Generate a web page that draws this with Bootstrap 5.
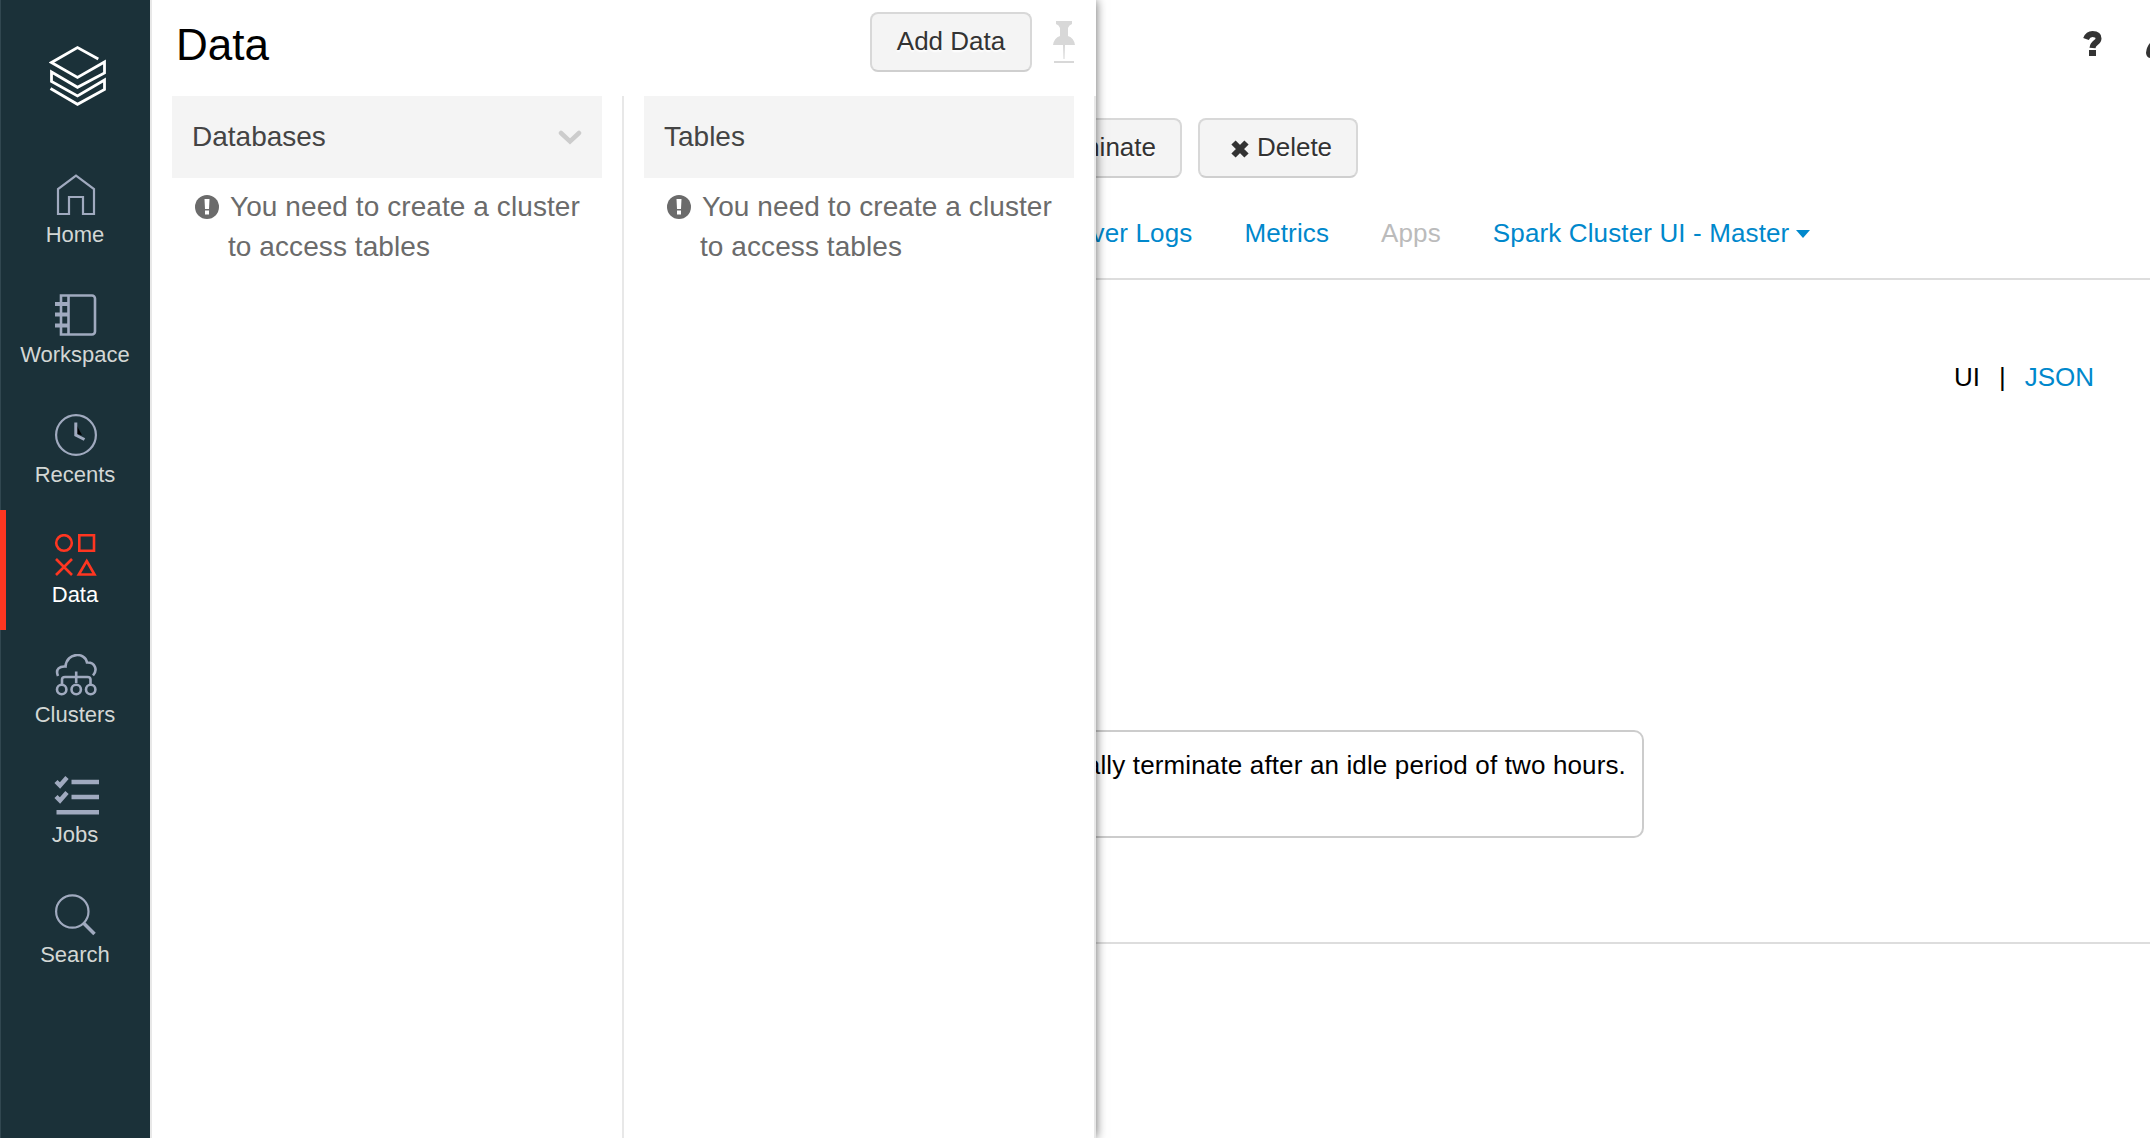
<!DOCTYPE html>
<html lang="en">
<head>
<meta charset="utf-8">
<title>Data</title>
<link href="https://cdn.jsdelivr.net/npm/bootstrap@5.3.0/dist/css/bootstrap.min.css" rel="stylesheet">
<style>
body{font-family:"Liberation Sans",Arial,sans-serif;font-size:26px;line-height:40px;color:#000;background:#fff;height:1138px;overflow:hidden}
a{color:#0088cc;text-decoration:none}
.side-nav{width:150px;background:#1b3139;border-left:1px solid #314750;z-index:6}
.brand-box{height:150px;padding:45px 0 0 48px}
.side-item{height:120px;padding-top:24px;margin-left:-1px;font-size:22px;line-height:28px;color:#d3d7d5;border-left:6px solid transparent;padding-right:6px}
.side-item svg{display:block;width:44px;height:42px;margin-bottom:5px;color:#a0aabf}
.side-item.active{color:#fff;border-left-color:#ff3621}
.side-item.active svg{color:#ff3621}
.data-panel{left:150px;top:0;width:946px;z-index:5;background:#fff;border-left:2px solid #e8e8e8;box-shadow:0 0 10px rgba(0,0,0,.6)}
.panel-head{height:96px;padding:12px 20px 0 24px}
.panel-head h1{font-size:44px;line-height:66px;margin:0;font-weight:400}
.btn-grey{--bs-btn-font-size:26px;--bs-btn-line-height:40px;--bs-btn-padding-y:0;--bs-btn-padding-x:0;--bs-btn-bg:#f4f4f4;--bs-btn-color:#333;--bs-btn-border-color:#d8d8d8;--bs-btn-border-width:2px;--bs-btn-border-radius:8px;height:60px;padding-bottom:2px;border-bottom-color:#cfcfcf;text-shadow:0 2px 2px #fff}
.w-add{width:162px;margin-right:20px}
.w-terminate{width:202px;padding-right:24px}
.w-delete{width:160px;padding-left:3px}
.panel-col{width:472px;padding:0 20px;border-right:2px solid #e8e8e8}
.col-head{height:82px;background:#f4f4f4;color:#444;font-size:28px;padding:0 20px 1px 20px}
.note{color:#6b6b6b;font-size:28px;padding:9px 0 0 22px;letter-spacing:.08px}
.note svg{margin:8px 9px 0 1px;flex:none}
.note-text{text-indent:2px;white-space:nowrap}
.workspace-main{min-width:0}
.top-icons{height:118px;padding:31px 0 0 1932px}
.btn-row{padding-left:830px;height:60px}
.tab-row{height:102px;padding:35px 0 0 908px;gap:52px;border-bottom:2px solid #ddd;letter-spacing:.13px}
.apps-off{color:#bbb}
.caret-down{display:inline-block;border:7.5px solid transparent;border-top:8px solid #0088cc;border-bottom:0;vertical-align:4px;margin-left:7px}
.view-row{padding:77px 56px 0 0;height:450px;gap:19px}
.msg-box{width:744px;height:108px;margin-left:750px;border:2px solid #ccc;border-radius:10px;padding:13px 16px;white-space:nowrap;letter-spacing:.14px}
.lower{height:106px;border-bottom:2px solid #ddd}
</style>
</head>
<body class="d-flex position-relative">
<nav class="side-nav position-relative flex-shrink-0 h-100">
  <div class="brand-box"><svg width="60" height="62" viewBox="0 0 60 62" fill="none" stroke="#fff" stroke-width="2.8"><path d="M49.3 14 28.5 2.5 2.5 17.5 28.5 32.5 55.5 17V28L28.5 42.3 2.5 27V36.500L28.500 51 55.500 35V44.500L28.500 59.300 1.500 43.500"/></svg></div>
  <div class="side-item d-flex flex-column align-items-center"><svg viewBox="0 0 44 42" fill="none" stroke="currentColor" stroke-width="2.2"><path d="M5 40V15L23 1.500 41 15V40H30V23H16V40Z"/></svg>Home</div>
  <div class="side-item d-flex flex-column align-items-center"><svg viewBox="0 0 44 42" fill="none" stroke="currentColor" stroke-width="2.600"><path d="M8 1.500H39a3 3 0 0 1 3 3V37.500a3 3 0 0 1-3 3H8ZM15.500 1.500V40.500"/><path stroke-width="4" d="M2 10H15M2 20.500H15M2 31.500H15"/></svg>Workspace</div>
  <div class="side-item d-flex flex-column align-items-center"><svg viewBox="0 0 44 42" fill="none" stroke="currentColor"><circle cx="23" cy="21" r="19.900" stroke-width="2.200"/><path fill="#000" stroke="none" d="M24 12 29 21 24 20Z"/><path stroke-width="3" d="M22.800 8.500V21L31.500 25.500"/></svg>Recents</div>
  <div class="side-item active d-flex flex-column align-items-center"><svg viewBox="0 0 44 42" fill="none" stroke="currentColor" stroke-width="2.600"><circle cx="11" cy="9" r="7.800"/><path d="M26.300 1.300H41V16.700H26.300ZM3 25 19 41M19 25 3 41M33.700 27 41.500 40.500H25.800Z"/></svg>Data</div>
  <div class="side-item d-flex flex-column align-items-center"><svg viewBox="0 0 44 42" fill="none" stroke="currentColor" stroke-width="2.600"><path d="M5 22C2 15 7 12 12.500 12.500C14 -2 32 -2 34 8.500C42 8 45 16 40 21.500M23.200 17.500V29M9 30V25.500Q9 23 12 23H34.500Q37.500 23 37.500 25.500V30"/><circle cx="8.700" cy="35.500" r="4.700"/><circle cx="23.200" cy="35.500" r="4.700"/><circle cx="37.700" cy="35.500" r="4.700"/></svg>Clusters</div>
  <div class="side-item d-flex flex-column align-items-center"><svg class="overflow-visible" viewBox="0 0 44 42" fill="none" stroke="currentColor" stroke-width="4.400"><path d="M18.500 8H46M18.500 23H46M3.500 38.300H46" /><path d="M3 7.500 7 11.500 14 3.500M3 22.500 7 26.500 14 18.500"/></svg>Jobs</div>
  <div class="side-item d-flex flex-column align-items-center"><svg viewBox="0 0 44 42" fill="none" stroke="currentColor"><circle cx="19.300" cy="17.500" r="16.200" stroke-width="2.200"/><path stroke-width="3.600" d="M30.500 29 41.500 40"/></svg>Search</div>
</nav>

<main class="workspace-main flex-grow-1">
  <div class="top-icons d-flex overflow-hidden">
    <svg class="flex-shrink-0" width="22" height="26" viewBox="0 0 22 26"><path fill="none" stroke="#333" stroke-width="6" d="M4 8Q6 3 10.500 3Q16.500 3 16.500 7.500C16.500 12 11 11 10.500 17"/><path fill="#333" d="M7 19h7v6H7z"/></svg>
    <svg class="flex-shrink-0" width="46" height="30" viewBox="0 0 46 30"><path fill="#333" d="M46 12Q42.500 16 42 22Q42.500 26.500 46 27Z"/></svg>
  </div>
  <div class="btn-row d-flex gap-3">
    <button class="btn btn-grey w-terminate text-end">Terminate</button>
    <button class="btn btn-grey w-delete"><svg width="18" height="18" viewBox="0 0 18 18" stroke="#333" stroke-width="6" class="ms-1 me-2"><path d="M2.500 2.500 15.500 15.500M15.500 2.500 2.500 15.500"/></svg>Delete</button>
  </div>
  <div class="tab-row d-flex text-nowrap">
    <a href="#">Driver Logs</a><a href="#">Metrics</a><span class="apps-off">Apps</span><a href="#">Spark Cluster UI - Master<span class="caret-down"></span></a>
  </div>
  <div class="view-row d-flex justify-content-end"><span>UI</span><span>|</span><a href="#">JSON</a></div>
  <div class="msg-box d-flex justify-content-end">This cluster will automatically terminate after an idle period of two hours.</div>
  <div class="lower"></div>
</main>

<section class="data-panel position-absolute h-100 d-flex flex-column">
  <div class="panel-head d-flex">
    <h1 class="me-auto">Data</h1>
    <button class="btn btn-grey w-add">Add Data</button>
    <svg width="24" height="52" viewBox="0 0 24 52" fill="#d8d8d8"><path d="M4 9h16v3q-3 1-4 4v8q6 2 7 9H1q1-7 7-9v-8q-1-3-4-4zM11 33h2l-.5 14h-1zM2 49h20v2H2z"/></svg>
  </div>
  <div class="d-flex flex-grow-1">
    <div class="panel-col">
      <div class="col-head d-flex align-items-center justify-content-between">Databases<svg width="24" height="16" viewBox="0 0 24 16" fill="none" stroke="#ccc" stroke-width="4.500" stroke-linecap="round"><path d="M3 4 12 12.500 21 4"/></svg></div>
      <div class="note d-flex"><svg width="24" height="24" viewBox="0 0 24 24"><circle cx="12" cy="12" r="12" fill="#6b6b6b"/><path fill="#fff" d="M9.500 4h5l-.5 10h-4zM10 15.500h4V19.500h-4z"/></svg><div class="note-text">You need to create a cluster<br>to access tables</div></div>
    </div>
    <div class="panel-col">
      <div class="col-head d-flex align-items-center">Tables</div>
      <div class="note d-flex"><svg width="24" height="24" viewBox="0 0 24 24"><circle cx="12" cy="12" r="12" fill="#6b6b6b"/><path fill="#fff" d="M9.500 4h5l-.5 10h-4zM10 15.500h4V19.500h-4z"/></svg><div class="note-text">You need to create a cluster<br>to access tables</div></div>
    </div>
  </div>
</section>
<script src="https://cdn.jsdelivr.net/npm/bootstrap@5.3.0/dist/js/bootstrap.bundle.min.js"></script>
</body>
</html>
